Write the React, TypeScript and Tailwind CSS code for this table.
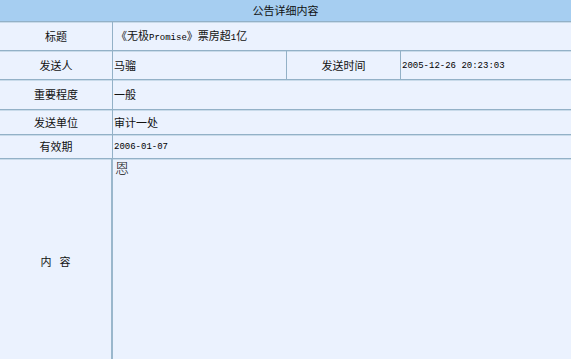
const font = "font-['SimSun','Noto_Sans_CJK_SC',sans-serif]";
// Latin and digits render as a narrow fixed-width face, like the old bitmap SimSun
const mono = "font-['Liberation_Mono',monospace] text-[9px] text-black";

type Row = { label: string; value: React.ReactNode; h: string };

const rows: Row[] = [
  { label: "重要程度", value: "一般", h: "h-[30px]" },
  { label: "发送单位", value: "审计一处", h: "h-[25px]" },
  { label: "有效期", value: <span className={`${mono} pt-[2px]`}>2006-01-07</span>, h: "h-[24px]" },
];

const line = "border-b border-[#93b1c7] shadow-[0_1px_0_#c9dbea]";

export default function App() {
  return (
    <div className={`w-[571px] h-[359px] overflow-hidden bg-[#ebf2fe] text-[11px] text-[#111] ${font}`}>
      <div className={`h-[22px] bg-[#a6cef1] flex items-center justify-center ${line}`}>
        公告详细内容
      </div>

      <div className={`flex h-[29px] ${line}`}>
        <div className="w-[113px] flex items-center justify-center border-r border-[#93b1c7]">标题</div>
        <div className="flex-1 flex items-center pl-[3px]">
          <span>
            《无极<span className={mono}>Promise</span>》票房超<span className={mono}>1</span>亿
          </span>
        </div>
      </div>

      <div className={`flex h-[29px] ${line}`}>
        <div className="w-[113px] flex items-center justify-center border-r border-[#93b1c7]">发送人</div>
        <div className="w-[174px] flex items-center pl-[1px] border-r border-[#93b1c7]">马骝</div>
        <div className="w-[114px] flex items-center justify-center border-r border-[#93b1c7]">发送时间</div>
        <div className="flex-1 flex items-center pl-[1px]">
          <span className={`${mono} whitespace-pre pt-[3px]`}>2005-12-26 20:23:03</span>
        </div>
      </div>

      {rows.map((r) => (
        <div key={r.label} className={`flex ${r.h} ${line}`}>
          <div className="w-[113px] flex items-center justify-center border-r border-[#93b1c7]">{r.label}</div>
          <div className="flex-1 flex items-center pl-[1px]">{r.value}</div>
        </div>
      ))}

      <div className="flex h-[204px]">
        <div className="w-[113px] flex items-center justify-center gap-[8px] border-r-2 border-[#9ab7cc]">
          <span>内</span>
          <span>容</span>
        </div>
        <div className="flex-1 pl-[2px] pt-[1px] text-[14px] leading-none font-light">恩</div>
      </div>
    </div>
  );
}
